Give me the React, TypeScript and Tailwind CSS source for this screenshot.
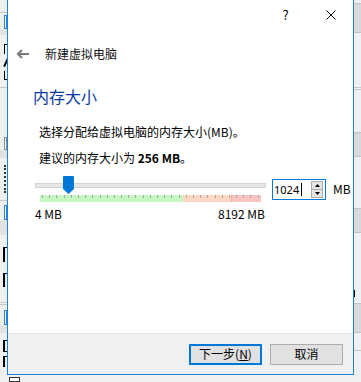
import React from 'react';

const ticks = Array.from({ length: 31 });

// bits of the main window that peek out on both sides of the dialog, top to bottom
const leftStrip = [
  'h-[12px]',
  'h-px bg-[#c8c8c8]',
  'h-[2px]',
  'h-[14px] ml-[4px] border border-[#2f7fd0] bg-white',
  'h-[6px] bg-[#e2e2e2]',
  'h-[9px]',
  'h-[10px] ml-[4px] border-l border-t border-black',
  'h-[4px]',
  'h-[9px] ml-[5px] w-[2px] bg-black rotate-[25deg]',
  'h-[4px]',
  'h-[9px] ml-[4px] border-l border-b border-black',
  'h-[7px]',
  'h-px bg-[#c8c8c8]',
  'h-[49px]',
  'h-[13px] ml-[4px] border border-[#8a8a8a] bg-white',
  'h-[8px] bg-[#e2e2e2]',
  'h-[7px]',
  'h-[28px] ml-[4px] border-l-2 border-dotted border-[#333]',
  'h-[7px]',
  'h-px bg-[#c8c8c8]',
  'h-[4px]',
  'h-[15px] ml-[4px] border border-[#2f7fd0] bg-white',
  'h-[15px] bg-[#e2e2e2]',
  'h-[12px]',
  'h-[15px] ml-[3px] border-l-2 border-t border-black',
  'h-[11px]',
  'h-[14px] ml-[3px] border-l-2 border-t border-black',
  'h-[15px]',
  'h-[3px] border-y border-[#c8c8c8]',
  'h-[5px]',
  'h-[15px] ml-[4px] border border-[#2f7fd0] bg-white',
  'h-[8px] bg-[#e2e2e2]',
  'h-[7px]',
  'h-[12px] ml-[3px] border-l-2 border-y border-black',
  'h-[4px]',
  'h-[11px] ml-[3px] border-l-2 border-t border-black',
];

const rightStrip = [
  'h-[3px]',
  'h-[30px] bg-[#d9d9d9] border-y border-[#c4c4c4]',
  'h-[54px]',
  'h-[3px] border-y border-[#c8c8c8]',
  'h-[42px]',
  'h-[25px] bg-[#d9d9d9] border-y border-[#c4c4c4]',
  'h-[51px]',
  'h-[25px] bg-[#d9d9d9] border-y border-[#c4c4c4]',
  'h-[57px]',
  'h-[7px] w-px bg-black',
  'h-[6px]',
  'h-[30px] bg-[#d9d9d9] border-y border-[#c4c4c4]',
  'h-[17px]',
  'h-px bg-[#c8c8c8]',
];

function Strip({ parts }: { parts: string[] }) {
  return (
    <div className="w-[7px] shrink-0 flex flex-col overflow-hidden">
      {parts.map((c, i) => (
        <div key={i} className={`shrink-0 ${c}`} />
      ))}
    </div>
  );
}

function MemorySlider() {
  return (
    <div className="relative w-[231px] h-[46px]">
      <div className="mt-[7px] h-[5px] bg-[#e7e7e7] border border-[#d4d4d4]" />
      <div className="relative mt-[7px] ml-[5px] w-[221px] h-[7px] flex">
        <div className="w-[143px] bg-[#c6f7c1]" />
        <div className="w-[49px] bg-[#fdd7c4] border-r border-[#f5aaa0]" />
        <div className="flex-1 bg-[#fcc3c3]" />
        <div className="absolute inset-x-[2px] top-0 flex justify-between">
          {ticks.map((_, i) => (
            <div key={i} className="w-px h-[3px] bg-[#a8a8a8]" />
          ))}
        </div>
      </div>
      <div className="mt-[5px] mr-px flex justify-between text-[12px] leading-[14px] text-black">
        <span>4 MB</span>
        <span>8192 MB</span>
      </div>
      {/* handle sits over the groove */}
      <svg className="absolute left-[28px] top-0" width="11" height="18" viewBox="0 0 11 18">
        <path d="M1 0h9a1 1 0 0 1 1 1v12l-5.5 5L0 13V1a1 1 0 0 1 1-1z" fill="#0078d7" />
      </svg>
    </div>
  );
}

function SpinBox() {
  return (
    <div className="mt-[3px] w-[54px] h-[21px] border border-[#0078d7] bg-white flex items-center pl-[1px]">
      <span className="text-[11px] leading-none text-black font-['Noto_Sans',sans-serif]">1024</span>
      <span className="ml-[2px] w-px h-[13px] bg-black" />
      <div className="ml-auto mr-[2px] w-[12px] h-[17px] flex flex-col border border-[#adadad] bg-[#e5e5e5]">
        <div className="flex-1 flex items-center justify-center border-b border-[#adadad]">
          <svg width="5" height="3" viewBox="0 0 5 3">
            <path d="M0 3h5L2.5 0z" fill="#000" />
          </svg>
        </div>
        <div className="flex-1 flex items-center justify-center">
          <svg width="5" height="3" viewBox="0 0 5 3">
            <path d="M0 0h5L2.5 3z" fill="#000" />
          </svg>
        </div>
      </div>
    </div>
  );
}

function WizardDialog() {
  return (
    <div className="mt-[-1px] w-[347px] h-[376px] shrink-0 border border-[#1883d7] bg-white flex flex-col">
      {/* title bar */}
      <div className="h-[30px] flex justify-end shrink-0">
        <div className="w-[45px] flex items-center justify-center text-[13px] text-black">?</div>
        <div className="w-[45px] flex items-center justify-center">
          <svg width="10" height="10" viewBox="0 0 10 10">
            <path d="M0.5 0.5l9 9M9.5 0.5l-9 9" stroke="#000" strokeWidth="1" />
          </svg>
        </div>
      </div>

      {/* wizard header */}
      <div className="h-[48px] flex items-center pl-[8px] shrink-0">
        <svg width="13" height="10" viewBox="0 0 13 10">
          <path d="M13 5H2.5M6 1L2 5l4 4" stroke="#7a7a7a" strokeWidth="2" fill="none" />
        </svg>
        <span className="ml-[16px] text-[12px] leading-[14px] text-[#111]">新建虚拟电脑</span>
      </div>

      <div className="pl-[25px]">
        <h1 className="mt-[8px] text-[16px] leading-[20px] text-[#0a3a9e]">内存大小</h1>

        <div className="pl-[6px] text-[12px] text-black">
          <p className="mt-[18px] leading-[16px]">选择分配给虚拟电脑的内存大小(MB)。</p>
          <p className="mt-[10px] leading-[16px]">
            建议的内存大小为 <b className="font-bold">256 MB</b>。
          </p>
        </div>

        <div className="mt-[10px] ml-[2px] flex items-start gap-[6px]">
          <MemorySlider />
          <SpinBox />
          <span className="ml-px mt-[6px] text-[12px] leading-[14px] text-black">MB</span>
        </div>
      </div>

      {/* footer */}
      <div className="mt-auto h-[41px] shrink-0 border-t border-[#dfdfdf] bg-[#f0f0f0] flex items-center justify-end gap-[8px] pr-[10px]">
        <button className="w-[73px] h-[21px] border-2 border-[#0078d7] bg-[#e1e1e1] text-[12px] leading-none text-black">
          下一步(<span className="underline">N</span>)
        </button>
        <button className="w-[73px] h-[21px] border border-[#adadad] bg-[#e1e1e1] text-[12px] leading-none text-black">
          取消
        </button>
      </div>
    </div>
  );
}

export default function App() {
  return (
    <div className="w-[361px] h-[382px] overflow-hidden bg-[#f0f0f0] flex font-['Noto_Sans_CJK_SC','Noto_Sans',sans-serif]">
      <Strip parts={leftStrip} />
      <div className="flex flex-col">
        <WizardDialog />
        <div className="ml-[2px] mt-[2px] w-[11px] h-[11px] border border-[#333] bg-white" />
      </div>
      <Strip parts={rightStrip} />
    </div>
  );
}
